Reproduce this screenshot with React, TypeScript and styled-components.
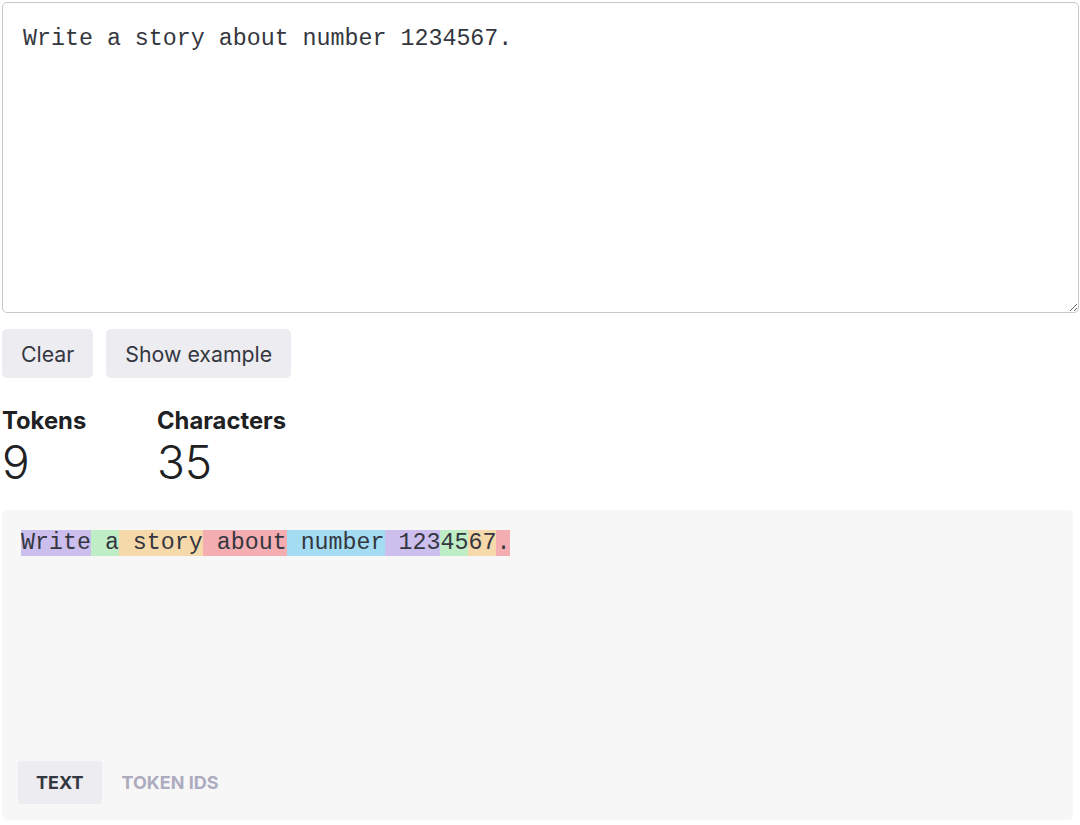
import React from "react";
import styled, { createGlobalStyle } from "styled-components";

const GlobalStyle = createGlobalStyle`
  html, body {
    margin: 0;
    padding: 0;
    background: #ffffff;
  }
  body {
    font-family: Inter, "Liberation Sans", Arial, sans-serif;
    color: #353740;
  }
`;

type Token = { text: string; tone: number };

const tokens: Token[] = [
  { text: "Write", tone: 0 },
  { text: " a", tone: 1 },
  { text: " story", tone: 2 },
  { text: " about", tone: 3 },
  { text: " number", tone: 4 },
  { text: " 123", tone: 0 },
  { text: "45", tone: 1 },
  { text: "67", tone: 2 },
  { text: ".", tone: 3 },
];

const tones = [
  "rgba(107, 64, 216, 0.3)",
  "rgba(104, 222, 122, 0.4)",
  "rgba(244, 172, 54, 0.4)",
  "rgba(239, 65, 70, 0.4)",
  "rgba(39, 181, 234, 0.4)",
];

const App = () => {
  const [value, setValue] = React.useState<string>("Write a story about number 1234567.");
  const [tab, setTab] = React.useState<"text" | "ids">("text");

  return (
    <Page>
      <GlobalStyle />
      <Input
        value={value}
        onChange={(e) => setValue(e.currentTarget.value)}
        spellCheck={false}
      />
      <Actions>
        <Button onClick={() => setValue("")}>Clear</Button>
        <Button>Show example</Button>
      </Actions>
      <Stats>
        <Stat $width={155}>
          <StatLabel>Tokens</StatLabel>
          <StatValue>9</StatValue>
        </Stat>
        <Stat>
          <StatLabel>Characters</StatLabel>
          <StatValue>35</StatValue>
        </Stat>
      </Stats>
      <Output>
        <Tokens>
          {tokens.map((t, i) => (
            <Piece key={i} $tone={tones[t.tone]}>{t.text}</Piece>
          ))}
        </Tokens>
        <Tabs>
          <Tab $active={tab === "text"} onClick={() => setTab("text")}>Text</Tab>
          <Tab $active={tab === "ids"} onClick={() => setTab("ids")}>Token IDs</Tab>
        </Tabs>
      </Output>
    </Page>
  );
};

export default App;

const Page = styled.div`
  width: 1076px;
  padding: 2px 0 0 2px;
`;

const Input = styled.textarea`
  display: block;
  box-sizing: border-box;
  width: 1077px;
  height: 311px;
  margin: 0;
  padding: 22px 20px;
  border: 1px solid #c8c8cc;
  border-radius: 5px;
  font-family: "Liberation Mono", "DejaVu Sans Mono", monospace;
  font-size: 23.3px;
  line-height: 28px;
  color: #353740;
  background: #ffffff;
  resize: vertical;
  outline: none;
`;

const Actions = styled.div`
  display: flex;
  gap: 13px;
  margin-top: 16px;
`;

const Button = styled.button`
  height: 49px;
  padding: 0 19px;
  border: none;
  border-radius: 5px;
  background: #ececf1;
  color: #353740;
  font-family: Inter, "Liberation Sans", Arial, sans-serif;
  font-size: 21.3px;
  cursor: pointer;
`;

const Stats = styled.div`
  display: flex;
  margin-top: 28px;
`;

const Stat = styled.div<{ $width?: number }>`
  display: flex;
  flex-direction: column;
  width: ${(p) => (p.$width ? `${p.$width}px` : "auto")};
`;

const StatLabel = styled.div`
  font-size: 23.8px;
  font-weight: 700;
  line-height: 30px;
  color: #202123;
`;

const StatValue = styled.div`
  margin-top: 1px;
  font-size: 46px;
  font-weight: 300;
  line-height: 50px;
  color: #202123;
`;

const Output = styled.div`
  box-sizing: border-box;
  display: flex;
  flex-direction: column;
  justify-content: space-between;
  width: 1071px;
  height: 310px;
  margin-top: 23px;
  padding: 19px 16px 16px 16px;
  background: #f7f7f8;
  border-radius: 5px;
`;

const Tokens = styled.div`
  padding-left: 3px;
  font-family: "Liberation Mono", "DejaVu Sans Mono", monospace;
  font-size: 23.3px;
  line-height: 28px;
  color: #353740;
  white-space: pre-wrap;
`;

const Piece = styled.span<{ $tone: string }>`
  background: ${(p) => p.$tone};
`;

const Tabs = styled.div`
  display: flex;
  gap: 2px;
`;

const Tab = styled.button<{ $active: boolean }>`
  height: 43px;
  padding: 0 18px;
  border: none;
  border-radius: 3px;
  background: ${(p) => (p.$active ? "#ececf1" : "transparent")};
  color: ${(p) => (p.$active ? "#353740" : "#acacbe")};
  font-family: Inter, "Liberation Sans", Arial, sans-serif;
  font-size: 18px;
  font-weight: 700;
  text-transform: uppercase;
  cursor: pointer;
`;
